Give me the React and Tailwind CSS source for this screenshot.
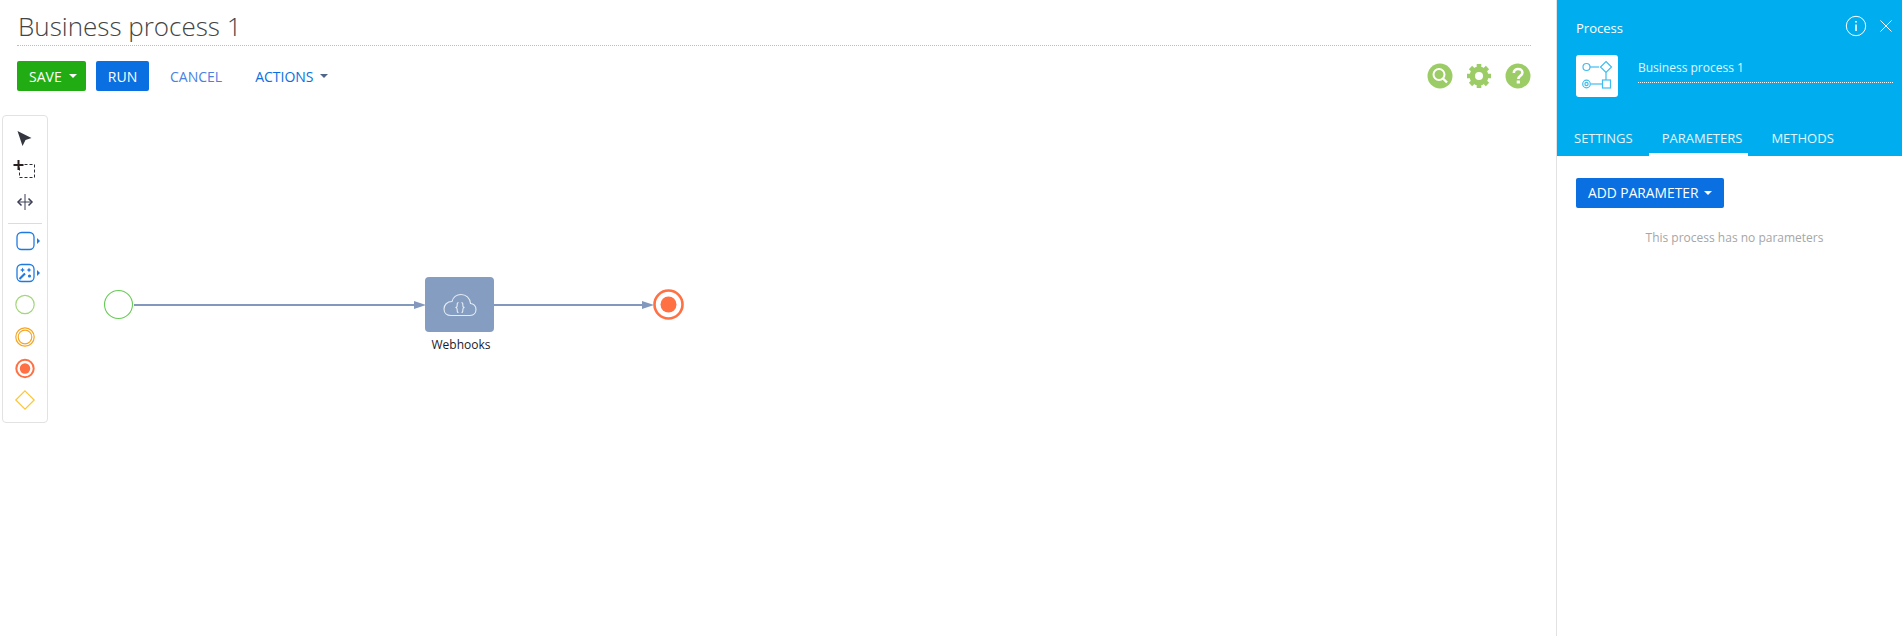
import React from 'react';

const Caret = ({ className }) => (
  <span className={`inline-block w-0 h-0 border-x-[4px] border-x-transparent border-t-[4px] ${className}`} />
);

const ToolbarIcon = ({ children }) => (
  <svg width="32" height="32" viewBox="0 0 32 32" fill="none" className="block">
    {children}
  </svg>
);

const Toolbar = () => (
  <div className="absolute left-[2px] top-[115px] w-[46px] h-[308px] bg-white border border-[#e2e2e2] rounded-[4px] pt-[6px] flex flex-col items-center">
    <ToolbarIcon>
      <path d="M8.5 9 L22.5 16 L16.5 18 L13.5 24 Z" fill="#33363f" />
    </ToolbarIcon>
    <ToolbarIcon>
      <path d="M10.5 10.5 H25.5 V23.5 H10.5 Z" stroke="#2b2f38" strokeDasharray="3 2" />
      <path d="M4.5 11 H14.5 M9.5 6 V16" stroke="#2b2020" strokeWidth="2" />
    </ToolbarIcon>
    <ToolbarIcon>
      <path d="M16 8 V24 M10 16 H22" stroke="#3a3f55" strokeWidth="1" />
      <path d="M12.5 12.5 L9 16 L12.5 19.5 M19.5 12.5 L23 16 L19.5 19.5" stroke="#3a3f55" strokeWidth="1.5" />
    </ToolbarIcon>
    <div className="w-[34px] h-px bg-[#dcdcdc] mt-[5px] mb-[1px] shrink-0" />
    <ToolbarIcon>
      <rect x="8" y="7.5" width="17" height="17" rx="4.5" stroke="#1f7ae0" strokeWidth="1.3" />
      <path d="M28 13 L31 16 L28 19 Z" fill="#1f7ae0" />
    </ToolbarIcon>
    <ToolbarIcon>
      <rect x="8" y="7.5" width="17" height="17" rx="4.5" stroke="#1f7ae0" strokeWidth="1.3" />
      <path d="M10.5 22 L16 16.5" stroke="#1f7ae0" strokeWidth="2.2" />
      <path d="M13.5 10.5 L14.3 12.2 L16 13 L14.3 13.8 L13.5 15.5 L12.7 13.8 L11 13 L12.7 12.2 Z" fill="#1f7ae0" />
      <path d="M20 10.5 L20.8 12.2 L22.5 13 L20.8 13.8 L20 15.5 L19.2 13.8 L17.5 13 L19.2 12.2 Z" fill="#1f7ae0" />
      <circle cx="20.5" cy="19" r="1.6" fill="#1f7ae0" />
      <path d="M28 13 L31 16 L28 19 Z" fill="#1f7ae0" />
    </ToolbarIcon>
    <ToolbarIcon>
      <circle cx="16" cy="15.5" r="9.2" stroke="#a5d67e" strokeWidth="1.2" />
    </ToolbarIcon>
    <ToolbarIcon>
      <circle cx="16" cy="16" r="9.2" stroke="#f5a623" strokeWidth="1.2" />
      <circle cx="16" cy="16" r="6.8" stroke="#f5a623" strokeWidth="1.2" />
    </ToolbarIcon>
    <ToolbarIcon>
      <circle cx="16" cy="15.5" r="8.7" stroke="#ff7043" strokeWidth="2" />
      <circle cx="16" cy="15.5" r="5.2" fill="#ff7043" />
    </ToolbarIcon>
    <ToolbarIcon>
      <path d="M16 5.8 L25.2 15 L16 24.2 L6.8 15 Z" stroke="#fcc737" strokeWidth="1.2" />
    </ToolbarIcon>
  </div>
);

const Diagram = () => (
  <>
    {/* стрелки и события */}
    <svg width="700" height="120" viewBox="0 0 700 120" fill="none" className="absolute left-0 top-[250px]">
      <circle cx="118.5" cy="54.5" r="14" stroke="#66cc55" strokeWidth="1.1" />
      <path d="M134 55 H418" stroke="#8299bd" strokeWidth="2" />
      <path d="M414 51 L426 55 L414 59 Z" fill="#8299bd" />
      <path d="M494 55 H646" stroke="#8299bd" strokeWidth="2" />
      <path d="M642 51 L654 55 L642 59 Z" fill="#8299bd" />
      <circle cx="668.5" cy="54.5" r="14" stroke="#ff7043" strokeWidth="2.6" />
      <circle cx="668.5" cy="54.5" r="8" fill="#ff7043" />
    </svg>
    <div className="absolute left-[425px] top-[277px] w-[69px] h-[55px] bg-[#849dc1] rounded-[4px] flex items-center justify-center">
      <svg width="34" height="24" viewBox="0 0 34 24" fill="none" stroke="#e6ecf5" strokeWidth="1.1">
        <path d="M8 22.5 H27 C31 22.5 33 19.5 33 16.5 C33 13 30.5 10.5 27.5 10.5 C27 5 23 1.5 18 1.5 C13.5 1.5 10 4.5 9 8.5 C4 8.5 1 12 1 16 C1 20 4 22.5 8 22.5 Z" />
        <path d="M15.5 9.5 C13.5 9.5 14.5 12 14 13.5 C13.8 14.2 13.2 14.4 12.5 14.5 C13.2 14.6 13.8 14.8 14 15.5 C14.5 17 13.5 19.5 15.5 19.5 M18.5 9.5 C20.5 9.5 19.5 12 20 13.5 C20.2 14.2 20.8 14.4 21.5 14.5 C20.8 14.6 20.2 14.8 20 15.5 C19.5 17 20.5 19.5 18.5 19.5" />
      </svg>
    </div>
    <div className="absolute left-[401px] w-[120px] top-[336px] text-center text-[12px] leading-[18px] text-[#1a1a2a]">Webhooks</div>
  </>
);

const TopIcons = () => (
  <div className="ml-auto flex items-center gap-[13px]">
    <svg width="26" height="26" viewBox="0 0 26 26" fill="none">
      <circle cx="13" cy="13" r="12.5" fill="#9ccc65" />
      <circle cx="12" cy="11.5" r="5.5" stroke="#fff" strokeWidth="2" />
      <path d="M16 15.5 L20 19.5" stroke="#fff" strokeWidth="2.4" />
    </svg>
    <svg width="26" height="26" viewBox="0 0 26 26" fill="none">
      <circle cx="13" cy="13" r="6.5" stroke="#9ccc65" strokeWidth="6" />
      <path d="M13 1 V25 M1 13 H25 M4.5 4.5 L21.5 21.5 M21.5 4.5 L4.5 21.5" stroke="#9ccc65" strokeWidth="4.6" />
      <circle cx="13" cy="13" r="4" fill="#fff" />
    </svg>
    <svg width="26" height="26" viewBox="0 0 26 26" fill="none">
      <circle cx="13" cy="13" r="12.5" fill="#9ccc65" />
      <path d="M8.8 10 C8.8 7.5 10.8 6 13.2 6 C15.6 6 17.4 7.5 17.4 9.7 C17.4 12.6 13.3 12.8 13.3 16" stroke="#fff" strokeWidth="2.6" />
      <rect x="11.7" y="17.5" width="3.2" height="3" fill="#fff" />
    </svg>
  </div>
);

const Sidebar = () => (
  <aside className="w-[346px] shrink-0 border-l border-[#e2e2e2] h-[636px]">
    <div className="bg-[#00aeef] h-[156px] relative text-white">
      <div className="absolute left-[19px] top-[18px] text-[13px] leading-[20px]">Process</div>
      <svg width="22" height="22" viewBox="0 0 22 22" fill="none" stroke="#fff" className="absolute right-[35px] top-[15px]">
        <circle cx="11" cy="11" r="9.7" />
        <path d="M11 9.5 V16" strokeWidth="1.6" />
        <path d="M11 6 V7.6" strokeWidth="1.8" />
      </svg>
      <svg width="14" height="14" viewBox="0 0 14 14" fill="none" stroke="#fff" className="absolute right-[9px] top-[19px]">
        <path d="M1.5 1.5 L12.5 12.5 M12.5 1.5 L1.5 12.5" />
      </svg>
      <div className="absolute left-[19px] top-[55px] w-[42px] h-[42px] bg-white rounded-[3px]">
        <svg width="42" height="42" viewBox="0 0 42 42" fill="none" stroke="#3fbdf0" strokeWidth="1.2">
          <circle cx="10.5" cy="12" r="3.5" />
          <path d="M14 12 H23" />
          <path d="M30 6.5 L35.5 12 L30 17.5 L24.5 12 Z" />
          <path d="M30 17.5 V25" />
          <rect x="26.5" y="25" width="8" height="8" />
          <path d="M26.5 29 H15" />
          <circle cx="10.5" cy="29" r="3.8" />
          <circle cx="10.5" cy="29" r="1.6" />
        </svg>
      </div>
      <div className="absolute left-[81px] right-[9px] top-[58px] h-[25px] border-b border-dotted border-white text-[12px] leading-[20px] text-[#e3f5fd]">
        Business process 1
      </div>
      <div className="absolute left-0 bottom-0 flex text-[13px] leading-[20px] h-[34px] text-[#e3f5fd]">
        <div className="pl-[17px] pr-[16px] pt-[6px]">SETTINGS</div>
        <div className="pl-[13px] pr-[6px] pt-[6px] border-b-[3px] border-white h-[34px]">PARAMETERS</div>
        <div className="pl-[23px] pt-[6px]">METHODS</div>
      </div>
    </div>
    <div className="pl-[19px] pt-[22px]">
      <button className="h-[30px] w-[148px] bg-[#0a6fe0] rounded-[2px] text-white text-[13.8px] flex items-center pl-[12px] gap-[6px]">
        ADD PARAMETER
        <Caret className="border-t-white" />
      </button>
    </div>
    <div className="text-center text-[12px] leading-[18px] text-[#a6a6a6] mt-[21px] pl-[10px]">This process has no parameters</div>
  </aside>
);

const App = () => (
  <div className="w-[1902px] h-[636px] bg-white flex overflow-hidden font-['Open_Sans',sans-serif]">
    <main className="relative w-[1556px] shrink-0">
      <div className="pl-[18px] pt-[8px] pr-[25px]">
        <h1 className="text-[26px] leading-[36px] font-light text-[#444]">Business process 1</h1>
        <div className="border-b border-dotted border-[#bdbdbd] ml-[-1px] mt-[1px]" />
        <div className="flex items-center mt-[15px] ml-[-1px] text-[14px]">
          <button className="h-[30px] w-[69px] bg-[#22ac14] rounded-[2px] text-white flex items-center pl-[12px] gap-[7px]">
            SAVE
            <Caret className="border-t-white" />
          </button>
          <button className="h-[30px] w-[53px] ml-[10px] bg-[#0a6fe0] rounded-[2px] text-white">RUN</button>
          <button className="ml-[21px] text-[#4b7fe0]">CANCEL</button>
          <button className="ml-[33px] text-[#0a6fe0] flex items-center gap-[6px]">
            ACTIONS
            <Caret className="border-t-[#50658c]" />
          </button>
          <TopIcons />
        </div>
      </div>
      <Toolbar />
      <Diagram />
    </main>
    <Sidebar />
  </div>
);

export default App;
